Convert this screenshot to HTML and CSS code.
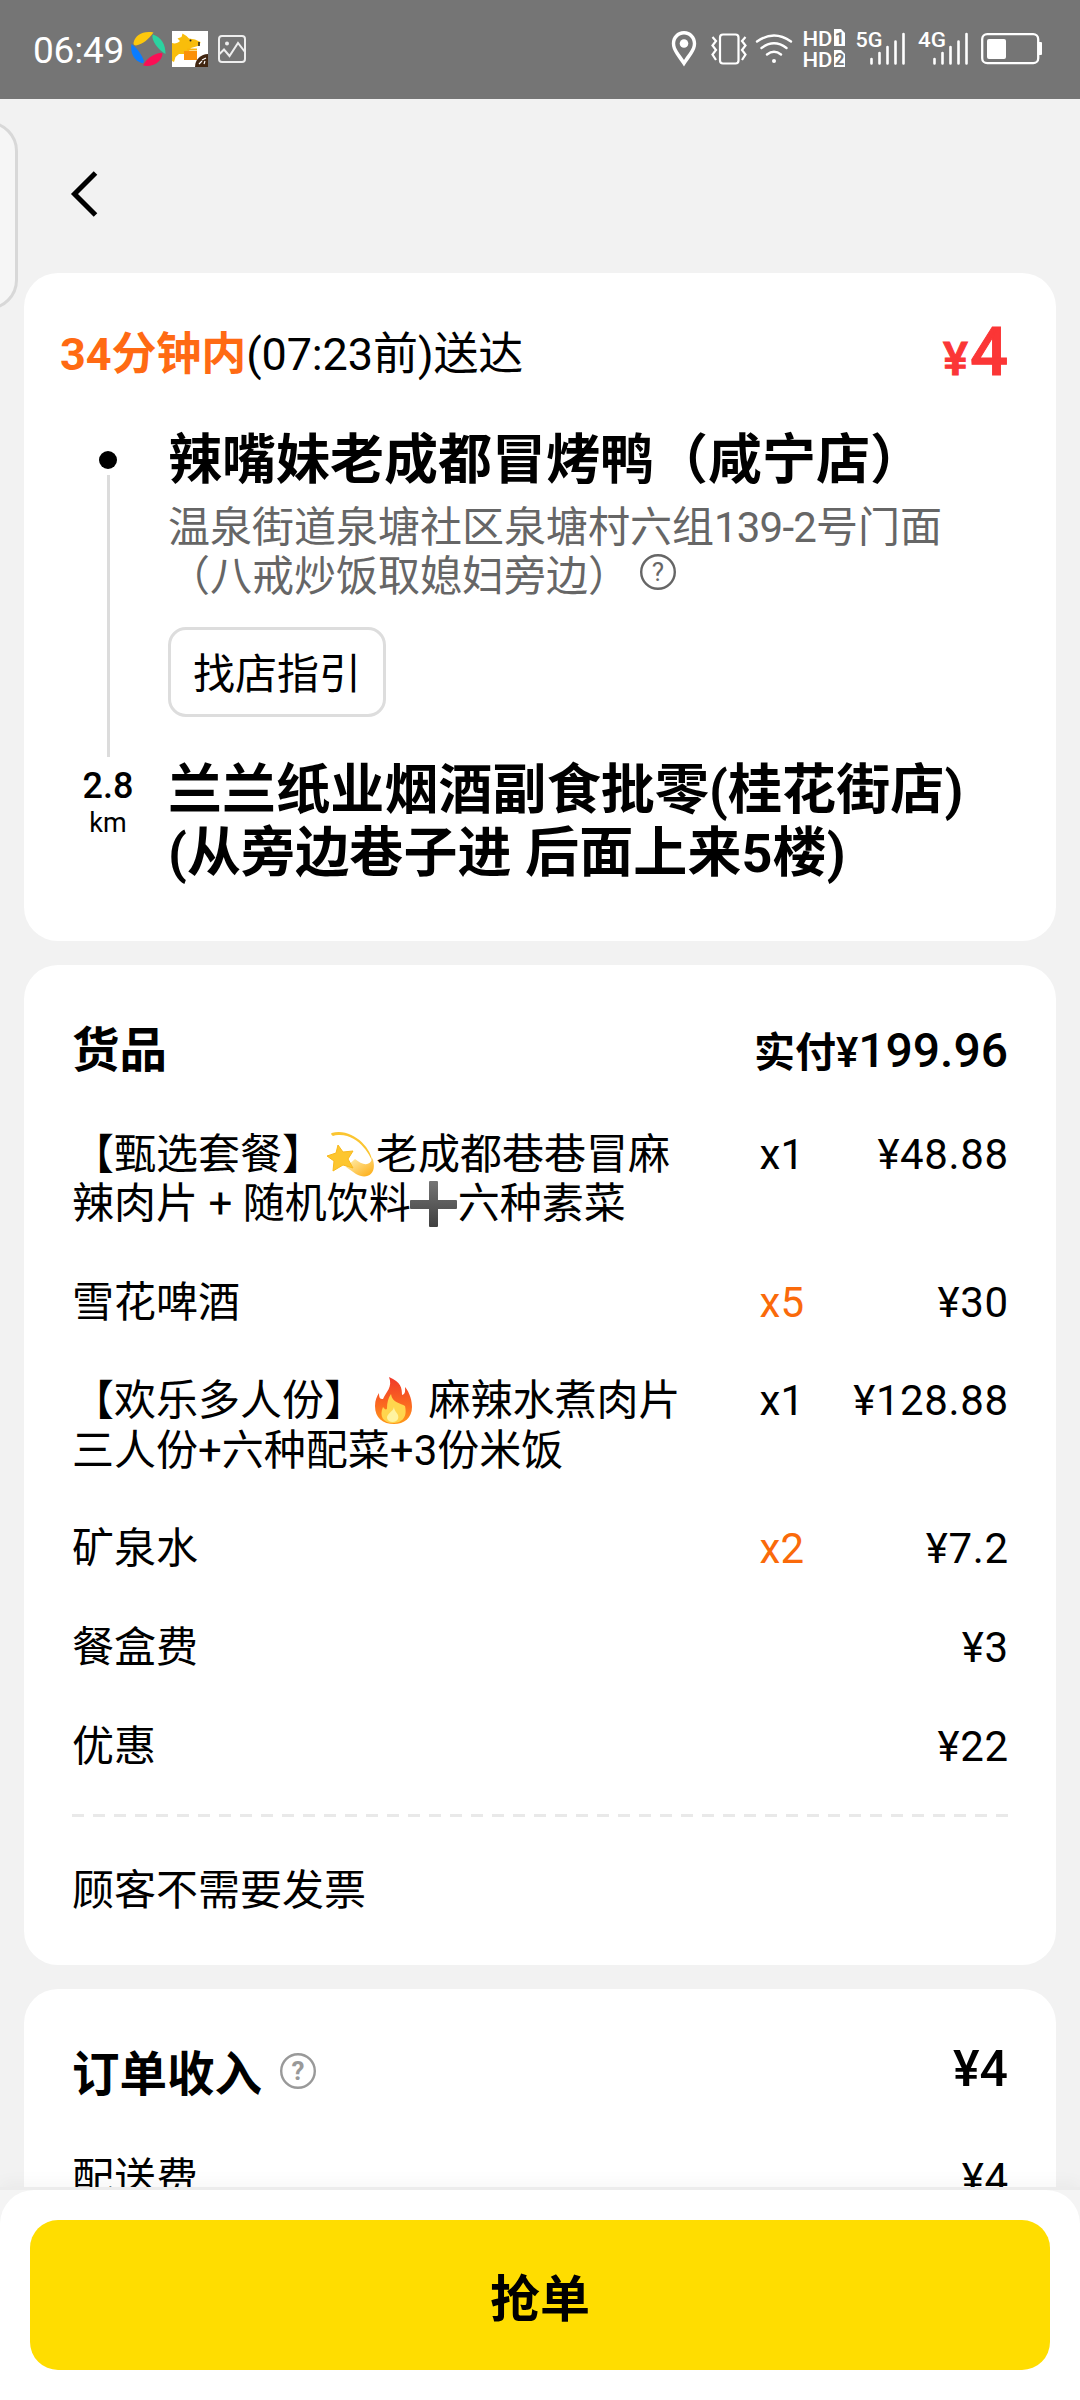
FILE: index.html
```html
<!DOCTYPE html>
<html lang="zh-CN">
<head>
<meta charset="utf-8">
<title>订单详情</title>
<link rel="stylesheet" href="styles.css">
</head>
<body>
<div class="screen">
  <header class="status">
    <span class="clock">06:49</span>
    <svg class="apps" width="124" height="40" viewBox="128 29 124 40">
      <path d="M133.500 43C135 35 143 30.500 153.500 32.500C149 39 143 44 136 45.500C134 45.500 133.500 44.500 133.500 43Z" fill="#fdc80c"/>
      <path d="M153 34.500C161 37 165.500 44 165.500 54C159 50 154 44 152.500 38C152.300 36 152.500 35 153 34.500Z" fill="#2bd3a0"/>
      <path d="M162.500 54C161.500 62 153 67.500 143 65.500C146 59 153 54 160 53C161.500 53 162.200 53.300 162.500 54Z" fill="#fb0f55"/>
      <path d="M131.500 44C137 48 142 55 143.800 60.500C144 62.500 143 63.500 141.500 63C134 60.500 130 53 131.500 44Z" fill="#0a7cff"/>
      <rect x="172" y="31" width="36" height="36" fill="#fff"/>
      <path d="M172 43C175 44 178 43 180 41L177.500 38.500L181.500 37L182.500 33.500L186.500 36L189 38.500L195 39.500L200.500 42L199.500 45.500L191 48L189 51H184V54H179L175.500 57L174 62L172 61Z" fill="#f9bd0b"/>
      <rect x="184" y="51" width="13" height="9" fill="#fb9108"/>
      <path d="M187 49.500H197" stroke="#fbb40b" stroke-width="2"/>
      <circle cx="190.500" cy="40.500" r="1" fill="#222"/>
      <path d="M199 42V46" stroke="#222" stroke-width="1.500"/>
      <path d="M195 67A13 13 0 0 1 208 54V67Z" fill="#402510"/>
      <path d="M199 64L202 61M202 60L206 58M204 64L205 61" stroke="#fff" stroke-width="1.200"/>
      <rect x="219" y="36" width="26" height="26" rx="3" fill="none" stroke="#eee" stroke-width="2"/>
      <circle cx="227" cy="43.500" r="2" fill="#eee"/>
      <path d="M219.500 54L224 49.500L229.500 56L238 43L245 52" fill="none" stroke="#eee" stroke-width="2"/>
    </svg>
    <div class="signals">
      <svg width="36" height="40" viewBox="668 29 36 40"><path fill="#fff" fill-rule="evenodd" d="M684 31C677 31 671.800 36.500 671.800 43.500C671.800 51 678 57 684 66.500C690 57 696.200 51 696.200 43.500C696.200 36.500 691 31 684 31ZM684 34.500C689 34.500 692.800 38.500 692.800 43.500C692.800 49 688.500 53 684 60C679.500 53 675.200 49 675.200 43.500C675.200 38.500 679 34.500 684 34.500Z"/><circle cx="684" cy="43.500" r="4.300" fill="#fff"/></svg>
      <svg width="48" height="40" viewBox="704 29 48 40" fill="none" stroke="#fff" stroke-width="2.200"><rect x="720" y="34.500" width="18.500" height="29" rx="3"/><path d="M712.500 37L716 41L712.500 45.500L716 50L712.500 54.500L716 60M745.500 37L742 41L745.500 45.500L742 50L745.500 54.500L742 60"/></svg>
      <svg width="46" height="40" viewBox="752 29 46 40" fill="none" stroke="#fff" stroke-width="2.400" stroke-linecap="round"><path d="M757 41.500Q774 29.500 791 41.500M761.500 48Q774 38.500 786.500 48M767 54.500Q774 49 781 54.500"/><circle cx="774" cy="61" r="2" fill="#fff" stroke="none"/></svg>
      <svg class="net" width="52" height="40" viewBox="798 29 52 40"><text x="802.500" y="46" font-size="21" textLength="30" lengthAdjust="spacingAndGlyphs">HD</text><text x="802.500" y="67" font-size="21" textLength="30" lengthAdjust="spacingAndGlyphs">HD</text><path d="M834 29H841L845 33V46H834ZM834 50H841L845 54V67H834Z" fill="#fff"/><g class="slot"><text x="834.800" y="44" font-size="17">1</text><text x="834.800" y="65" font-size="17">2</text></g></svg>
      <svg class="net bars" width="62" height="40" viewBox="850 29 62 40"><text x="855.500" y="46.500" font-size="21" textLength="27" lengthAdjust="spacingAndGlyphs">5G</text><path d="M871.500 59V63.500M879.500 53V63.500M887.500 47V63.500M895.500 41.500V63.500M903.500 34V63.500"/></svg>
      <svg class="net bars" width="62" height="40" viewBox="912 29 62 40"><text x="918" y="46.500" font-size="21" textLength="28" lengthAdjust="spacingAndGlyphs">4G</text><path d="M934.500 59V63.500M942.500 53V63.500M950.500 47V63.500M958.500 41.500V63.500M966.500 34V63.500"/></svg>
      <svg width="72" height="40" viewBox="974 29 72 40"><rect x="982.200" y="34.200" width="56" height="29" rx="5" fill="none" stroke="#fff" stroke-width="2.300"/><rect x="987" y="39" width="19" height="20" rx="2" fill="#fff"/><path d="M1039 42H1041Q1042 42 1042 43V54Q1042 55 1041 55H1039Z" fill="#fff"/></svg>
    </div>
  </header>

  <main class="content">
    <div class="edge-tab"></div>
    <nav class="nav">
      <svg width="30" height="48" viewBox="70 170 30 48" fill="none" stroke="#000" stroke-width="5"><path d="M96.500 173L75.500 194L96.500 215"/></svg>
    </nav>

    <section class="card route">
      <div class="row deliver">
        <div class="eta"><b>34分钟内</b>(07:23前)送达</div>
        <div class="fee"><small>¥</small>4</div>
      </div>
      <div class="stops">
        <div class="track"><i class="dot"></i><i class="line"></i><span class="km-num">2.8</span><span class="km">km</span></div>
        <div class="places">
          <h2 class="place">辣嘴妹老成都冒烤鸭（咸宁店）</h2>
          <p class="addr">温泉街道泉塘社区泉塘村六组<span class="no">139-2</span>号门面<br>（八戒炒饭取媳妇旁边）<svg class="help" width="38" height="38" viewBox="0 0 38 38"><circle cx="19" cy="19" r="16.800"/><text x="19" y="28">?</text></svg></p>
          <button class="guide">找店指引</button>
          <h2 class="place customer">兰兰纸业烟酒副食批零(桂花街店)<br>(从旁边巷子进 后面上来5楼)</h2>
        </div>
      </div>
    </section>

    <section class="card goods">
      <div class="row head">
        <h3 class="title">货品</h3>
        <div class="paid"><b>实付</b>¥<span>199.96</span></div>
      </div>
      <div class="items">
        <div class="item"><div>【甄选套餐】<svg class="emoji star" width="50" height="49" viewBox="0 0 50 49"><defs><linearGradient id="tail" x1="0" y1="0" x2="1" y2="1"><stop offset="0" stop-color="#fff3b8"/><stop offset="1" stop-color="#fda90c"/></linearGradient></defs><path d="M5.500 3C25-3 46 17 46.500 33C46 28 34 5 14 5Q10 4.500 7 6Q4.500 5 5.500 3Z" fill="#fbc531"/><path d="M46.500 28C52 45 40 50 30 44L20 37L29 29C36 35 44 37 46.500 28Z" fill="url(#tail)"/><path d="M12 15L17 22L27 21L22 29L27 38L17 35L7 41L8 31L1 26L10 23Z" fill="#fdc62f" stroke="#f9b91c"/></svg>老成都巷巷冒麻<br>辣肉片 + 随机饮料<svg class="emoji plus" width="50" height="49" viewBox="2 0 50 49"><defs><linearGradient id="plus" x2="0" y2="1"><stop stop-color="#757575"/><stop offset="1" stop-color="#404040"/></linearGradient></defs><path d="M24 2H31Q32 2 32 3V21H50Q51 21 51 22V29Q51 30 50 30H32V47Q32 48 31 48H24Q23 48 23 47V30H5Q4 30 4 29V22Q4 21 5 21H23V3Q23 2 24 2Z" fill="url(#plus)"/></svg>六种素菜</div><span class="qty">x1</span><span class="price">¥48.88</span></div>
        <div class="item"><div>雪花啤酒</div><span class="qty many">x5</span><span class="price">¥30</span></div>
        <div class="item"><div>【欢乐多人份】<svg class="emoji flame" width="50" height="49" viewBox="0 0 50 49"><defs><linearGradient id="fire" x2="0" y2="1"><stop stop-color="#f0382a"/><stop offset=".6" stop-color="#fb6a20"/><stop offset="1" stop-color="#ff9a1a"/></linearGradient></defs><path d="M21 1C33 6 34 12 34 19C38 18 37 14 37 11C42 17 44 25 44 31C44 42 36 48 26 48C15 48 7 42 7 30C7 24 9 20 11 17C11 22 12 23 15 23C18 16 25 11 21 1Z" fill="url(#fire)"/><path d="M23 18C24 27 33 27 37 30C40 43 32 47 25 47C15 47 11 40 15 31C17 34 19 34 19 32C19 27 20 22 23 18Z" fill="#ffd54d"/><path d="M26 31C26 36 32 38 30 43C28 47 20 47 19 42C19 37 25 36 26 31Z" fill="#fff3a0"/></svg> 麻辣水煮肉片<br>三人份+六种配菜+3份米饭</div><span class="qty">x1</span><span class="price">¥128.88</span></div>
        <div class="item"><div>矿泉水</div><span class="qty many">x2</span><span class="price">¥7.2</span></div>
        <div class="item"><div>餐盒费</div><span class="qty"></span><span class="price">¥3</span></div>
        <div class="item"><div>优惠</div><span class="qty"></span><span class="price">¥22</span></div>
      </div>
      <div class="dash"></div>
      <p class="invoice">顾客不需要发票</p>
    </section>

    <section class="card income">
      <div class="row head">
        <h3 class="title">订单收入<svg class="help" width="38" height="38" viewBox="0 0 38 38"><circle cx="19" cy="19" r="16.800"/><text x="19" y="28">?</text></svg></h3>
        <div class="total">¥4</div>
      </div>
      <div class="item"><div>配送费</div><span class="qty"></span><span class="price">¥4</span></div>
    </section>
  </main>

  <footer class="footer"><div class="sheet"><button class="grab">抢单</button></div></footer>
</div>
</body>
</html>
```
FILE: styles.css
```css
* { box-sizing: border-box; margin: 0; padding: 0; }
body { background: #f2f2f2; font-family: Roboto, "Noto Sans CJK SC", sans-serif; color: #000; }
.screen { width: 1080px; height: 2400px; display: flex; flex-direction: column; overflow: hidden; }
button { font-family: inherit; color: inherit; }
svg { flex: none; }

.status { height: 99px; flex: none; background: #757575; display: flex; padding: 29px 34px 0 33px; }
.clock { width: 95px; font-size: 37px; line-height: 44px; color: #fff; letter-spacing: -0.2px; }
.signals { display: flex; margin-left: auto; }
.net { overflow: visible; }
.net text { fill: #fff; font-weight: 500; }
.net .slot text { fill: #757575; font-weight: 700; }
.bars path { stroke: #fff; stroke-width: 2.600; stroke-linecap: round; }

.content { height: 2088px; flex: none; position: relative; overflow: hidden; padding: 0 24px; display: flex; flex-direction: column; gap: 24px; }
.edge-tab { position: absolute; left: -60px; top: 22px; width: 78px; height: 189px; border: 3px solid #d8d8d8; border-radius: 30px; background: #f6f6f6; }
.nav { height: 150px; flex: none; padding: 71px 0 0 45px; }
.card { background: #fff; border-radius: 34px; flex: none; }
.row { display: flex; justify-content: space-between; }

.route { height: 668px; padding: 52px 48px 0 36px; }
.deliver { height: 105px; line-height: 60px; font-size: 45px; }
.eta { letter-spacing: -0.1px; }
.eta b { color: #ff6a13; }
.fee { color: #fb3636; font-size: 67px; font-weight: 500; line-height: 54px; -webkit-text-stroke: 1px #fb3636; }
.fee small { font-size: 47px; margin-right: 2px; }
.stops { display: flex; }
.track { width: 96px; flex: none; display: flex; flex-direction: column; align-items: center; padding-top: 21px; }
.dot { width: 18px; height: 18px; border-radius: 50%; background: #000; }
.line { width: 3px; height: 282px; margin-top: 6px; background: #dcdcdc; }
.km-num { margin-top: 9px; font-size: 36px; line-height: 40px; font-weight: 500; }
.km { margin-top: 2px; font-size: 27px; line-height: 30px; }
.places { padding-left: 12px; white-space: nowrap; }
.place { margin-top: -1px; font-size: 54px; line-height: 63px; font-weight: 700; }
.addr { margin-top: 11px; font-size: 42px; line-height: 49px; color: #666; }
.addr .no { letter-spacing: -0.8px; }
.help { vertical-align: -2px; fill: none; stroke: #666; stroke-width: 2.400; }
.help text { font-size: 26px; text-anchor: middle; fill: #666; stroke: none; }
.addr .help { margin: -4px 0 0 9px; vertical-align: 0; }
.guide { display: block; margin-top: 26px; width: 218px; height: 90px; border: 3px solid #ddd; border-radius: 18px; background: #fff; font-size: 42px; line-height: 84px; padding-top: 3px; }
.place.customer { margin-top: 42px; letter-spacing: 0.1px; }

.goods { height: 1000px; padding: 0 48px; }
.head { height: 165px; padding-top: 54px; line-height: 64px; }
.title { font-size: 47.500px; font-weight: 700; }
.paid { font-size: 42px; font-weight: 500; }
.paid b { font-size: 41px; }
.paid span { font-size: 48px; }
.items { display: flex; flex-direction: column; gap: 49.300px; }
.item { display: grid; grid-template-columns: minmax(0, 1fr) 130px 204px; font-size: 42px; line-height: 49.300px; text-align: right; white-space: nowrap; }
.item div { text-align: left; }
.price { letter-spacing: 0.6px; margin-right: -0.600px; }
.emoji { vertical-align: -10px; margin-top: -10px; }
.star { margin-left: 2px; }
.plus { margin-left: -3px; }
.flame { margin-left: 2px; }
.many { color: #fa6a0a; }
.dash { height: 3px; margin-top: 43px; background: repeating-linear-gradient(90deg, #e9e9e9 0 12px, transparent 12px 21px); }
.invoice { margin-top: 49px; font-size: 42px; line-height: 49.500px; }

.income { height: 400px; padding: 0 48px; }
.income .title .help { stroke: #999; margin-left: 17px; vertical-align: 1px; }
.income .help text { fill: #999; }
.total { font-size: 50px; font-weight: 500; line-height: 52px; }

.footer { flex: 1; background: #f4f4f4; border-top: 3px solid #ececec; position: relative; box-shadow: 0 -6px 14px rgba(0, 0, 0, 0.030); }
.sheet { height: 210px; background: #fff; border-radius: 34px 34px 0 0; padding: 30px; }
.grab { display: block; width: 100%; height: 150px; border: 0; border-radius: 28px; background: #ffdd00; font-size: 50px; font-weight: 700; }
```
